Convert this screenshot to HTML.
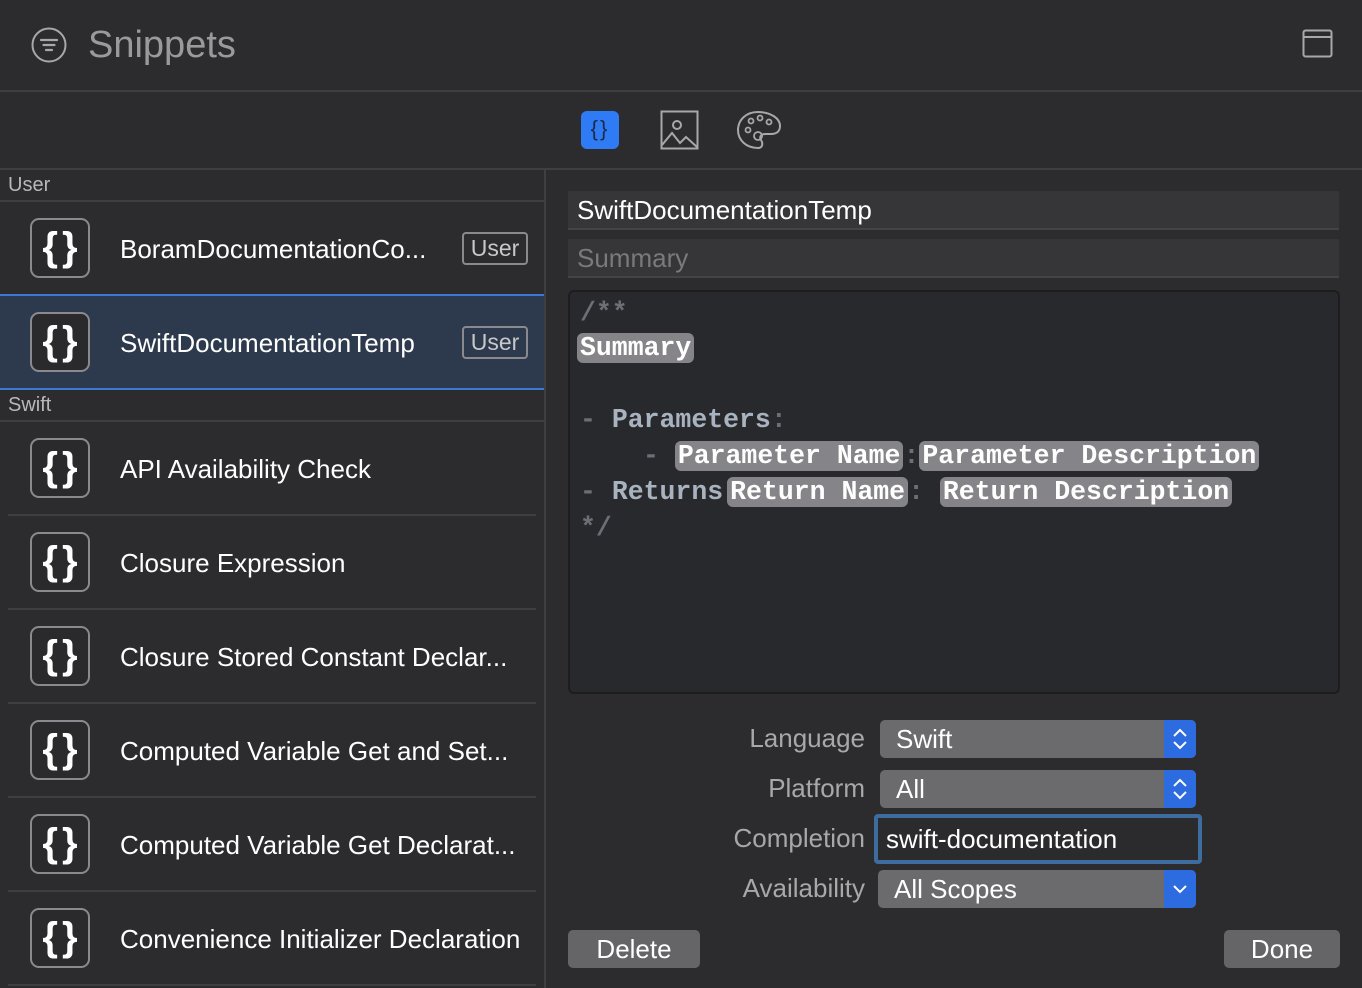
<!DOCTYPE html>
<html><head><meta charset="utf-8"><style>
*{box-sizing:border-box;margin:0;padding:0}
body{width:1362px;height:988px;background:#2c2c2e;font-family:"Liberation Sans",sans-serif;position:relative;overflow:hidden;color:#fff}
.abs{position:absolute}
.hline{position:absolute;height:2px;background:#3f3f42}
.row{position:absolute;left:0;width:544px;height:94px}
.icon{position:absolute;left:30px;top:16px;width:60px;height:60px;border:2px solid #8a8a8e;border-radius:9px;background:#2a2a2c;color:#fff;font-size:40px;text-align:center;line-height:54px;font-weight:bold;letter-spacing:4px;padding-left:4px}
.rt{position:absolute;left:120px;top:0;line-height:94px;font-size:26px;color:#fff;white-space:nowrap}
.badge{position:absolute;left:462px;top:30px;width:66px;height:33px;border:2px solid #8a8a8e;border-radius:4px;color:#c8c8c8;font-size:23px;text-align:center;line-height:29px}
.sec{position:absolute;left:8px;font-size:20px;color:#b8b8b8}
.sep{position:absolute;left:8px;width:528px;height:2px;background:#3f3f42}
.code{position:absolute;font-family:"Liberation Mono",monospace;font-weight:bold;font-size:26.5px;white-space:pre;line-height:36px}
.tok{background:#858589;color:#fff;border-radius:6px;padding:0 3px}
.lbl{position:absolute;right:497px;font-size:26px;color:#a8a8a8;text-align:right}
.pop{position:absolute;left:880px;width:316px;height:38px;background:#6b6b6d;border-radius:5px;font-size:26px;line-height:38px;padding-left:16px;color:#fff}
.pop .arr{position:absolute;right:0;top:0;width:32px;height:38px;background:#2d6ce0;border-radius:0 5px 5px 0}
.btn{position:absolute;top:930px;height:38px;background:#656567;border-radius:5px;font-size:26px;line-height:38px;text-align:center;color:#fff}
</style></head><body>
<svg class="abs" style="left:30px;top:26px" width="38" height="38" viewBox="0 0 38 38"><circle cx="19" cy="19" r="16.5" fill="none" stroke="#a8a8a8" stroke-width="2"/><path d="M11 14h16M13.5 19h11M16 24h6" stroke="#a8a8a8" stroke-width="2.2" stroke-linecap="round"/></svg>
<div class="abs" style="left:88px;top:24px;font-size:38px;color:#9a9a9c">Snippets</div>
<svg class="abs" style="left:1302px;top:29px" width="32" height="30"><rect x="1.5" y="1.5" width="28" height="26" rx="2" fill="none" stroke="#a8a8a8" stroke-width="2"/><path d="M2 8h28" stroke="#a8a8a8" stroke-width="2"/></svg>
<div class="hline" style="left:0;top:90px;width:1362px"></div>
<div class="abs" style="left:581px;top:111px;width:38px;height:38px;background:#2f7bf6;border-radius:6px;color:#1b2b4a;font-size:22px;text-align:center;line-height:36px;letter-spacing:2px">{}</div>
<svg class="abs" style="left:660px;top:110px" width="40" height="40"><rect x="1.5" y="1.5" width="36" height="37" fill="none" stroke="#a8a8a8" stroke-width="2"/><circle cx="17" cy="15" r="4" fill="none" stroke="#a8a8a8" stroke-width="2"/><path d="M2 35l10-12 8 10 6-6 11 10" fill="none" stroke="#a8a8a8" stroke-width="2"/></svg>
<svg class="abs" style="left:736px;top:110px" width="46" height="40" viewBox="0 0 46 40"><path d="M22 2C10 2 2 10 2 20c0 10 8 18 20 18 5 0 5-5 3-8-2-3 0-6 4-6h6c6 0 9-3 9-8C44 8 34 2 22 2z" fill="none" stroke="#a8a8a8" stroke-width="2"/><circle cx="12" cy="20" r="2.5" fill="none" stroke="#a8a8a8" stroke-width="1.8"/><circle cx="15" cy="11" r="2.5" fill="none" stroke="#a8a8a8" stroke-width="1.8"/><circle cx="24" cy="8" r="2.5" fill="none" stroke="#a8a8a8" stroke-width="1.8"/><circle cx="33" cy="12" r="2.5" fill="none" stroke="#a8a8a8" stroke-width="1.8"/><circle cx="22" cy="26" r="4" fill="none" stroke="#a8a8a8" stroke-width="1.8"/></svg>
<div class="hline" style="left:0;top:168px;width:1362px"></div>
<div class="abs" style="left:544px;top:170px;width:2px;height:818px;background:#3f3f42"></div>
<div class="sec" style="top:174px">User</div>
<div class="hline" style="left:0;top:200px;width:544px"></div>
<div class="row" style="top:202px"><div class="icon">{}</div><div class="rt">BoramDocumentationCo...</div><div class="badge">User</div></div>
<div class="row" style="top:294px;background:#2d3a4d;border-top:2px solid #3b78d8;border-bottom:2px solid #3b78d8;height:96px"><div class="icon" style="top:16px">{}</div><div class="rt">SwiftDocumentationTemp</div><div class="badge" style="top:30px">User</div></div>
<div class="sec" style="top:394px">Swift</div>
<div class="hline" style="left:0;top:420px;width:544px"></div>
<div class="row" style="top:422px"><div class="icon">{}</div><div class="rt">API Availability Check</div></div>
<div class="sep" style="top:514px"></div>
<div class="row" style="top:516px"><div class="icon">{}</div><div class="rt">Closure Expression</div></div>
<div class="sep" style="top:608px"></div>
<div class="row" style="top:610px"><div class="icon">{}</div><div class="rt">Closure Stored Constant Declar...</div></div>
<div class="sep" style="top:702px"></div>
<div class="row" style="top:704px"><div class="icon">{}</div><div class="rt">Computed Variable Get and Set...</div></div>
<div class="sep" style="top:796px"></div>
<div class="row" style="top:798px"><div class="icon">{}</div><div class="rt">Computed Variable Get Declarat...</div></div>
<div class="sep" style="top:890px"></div>
<div class="row" style="top:892px"><div class="icon">{}</div><div class="rt">Convenience Initializer Declaration</div></div>
<div class="sep" style="top:984px"></div>
<div class="abs" style="left:568px;top:191px;width:771px;height:39px;background:#363638;border-bottom:2px solid #444;font-size:26px;line-height:39px;padding-left:9px;color:#fff">SwiftDocumentationTemp</div>
<div class="abs" style="left:568px;top:239px;width:771px;height:39px;background:#363638;border-bottom:2px solid #444;font-size:26px;line-height:39px;padding-left:9px;color:#7a7a7c">Summary</div>
<div class="abs" style="left:568px;top:290px;width:772px;height:404px;background:#28292d;border:2px solid #1d1d1f;border-radius:6px"></div>
<div class="code" style="left:580px;top:295px;color:#6c6f75">/**</div>
<div class="code" style="left:577px;top:330px"><span class="tok">Summary</span></div>
<div class="code" style="left:580px;top:402px;color:#a9b2bf"><span style="color:#6c6f75">- </span>Parameters<span style="color:#6c6f75">:</span></div>
<div class="code" style="left:643px;top:438px;color:#fff"><span style="color:#6c6f75">- </span><span class="tok">Parameter Name</span><span style="color:#6c6f75">:</span><span class="tok">Parameter Description</span></div>
<div class="code" style="left:580px;top:474px;color:#a9b2bf"><span style="color:#6c6f75">- </span>Returns<span class="tok" style="margin-left:4px">Return Name</span><span style="color:#6c6f75">: </span><span class="tok">Return Description</span></div>
<div class="code" style="left:580px;top:510px;color:#6c6f75">*/</div>
<div class="lbl" style="top:723px">Language</div>
<div class="pop" style="top:720px">Swift<div class="arr"><svg width="32" height="38"><path d="M10 16l6-6 6 6M10 22l6 6 6-6" fill="none" stroke="#fff" stroke-width="2"/></svg></div></div>
<div class="lbl" style="top:773px">Platform</div>
<div class="pop" style="top:770px">All<div class="arr"><svg width="32" height="38"><path d="M10 16l6-6 6 6M10 22l6 6 6-6" fill="none" stroke="#fff" stroke-width="2"/></svg></div></div>
<div class="lbl" style="top:823px">Completion</div>
<div class="abs" style="left:874px;top:814px;width:328px;height:50px;border:4px solid #3f6c9e;border-radius:4px;background:#2b2b2d;font-size:26px;line-height:42px;padding-left:8px;color:#fff">swift-documentation</div>
<div class="lbl" style="top:873px">Availability</div>
<div class="pop" style="top:870px;left:878px;width:318px">All Scopes<div class="arr"><svg width="32" height="38"><path d="M10 16l6 6 6-6" fill="none" stroke="#fff" stroke-width="2"/></svg></div></div>
<div class="btn" style="left:568px;width:132px">Delete</div>
<div class="btn" style="left:1224px;width:116px">Done</div>
</body></html>
